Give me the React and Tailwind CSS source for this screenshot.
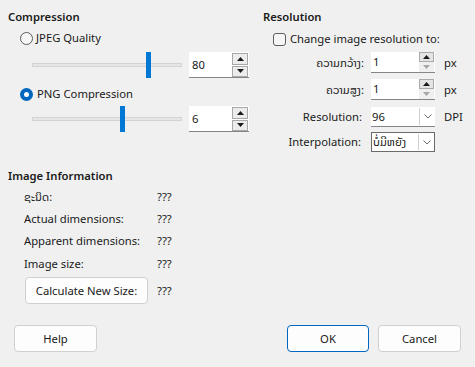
import React from 'react';

function Radio({ checked }) {
  if (checked) {
    return (
      <span className="w-[13px] h-[13px] rounded-full bg-[#0067c0] flex items-center justify-center shrink-0">
        <span className="w-[5px] h-[5px] rounded-full bg-white" />
      </span>
    );
  }
  return <span className="w-[13px] h-[13px] rounded-full border border-[#5d5d5d] bg-[#f6f6f6] shrink-0" />;
}

function Arrow({ up, disabled }) {
  return (
    <svg width="7" height="4" viewBox="0 0 7 4">
      {up ? (
        <path d="M0 4 L3.5 0 L7 4 Z" fill={disabled ? '#a6a6a6' : '#1a1a1a'} />
      ) : (
        <path d="M0 0 L3.5 4 L7 0 Z" fill={disabled ? '#a6a6a6' : '#1a1a1a'} />
      )}
    </svg>
  );
}

function Slider({ thumb }) {
  return (
    <div className="relative w-[150px] h-[26px] flex items-center">
      <div className="w-full h-[4px] bg-[#e6e6e6] border border-[#d3d3d3]" />
      <div className={`absolute top-0 h-[26px] w-[5px] bg-[#0078d4] ${thumb}`} />
    </div>
  );
}

function BigSpin({ value }) {
  return (
    <div className="w-[60px] h-[26px] flex bg-white border-b border-[#858585]">
      <span className="flex-1 flex items-center pl-[3px]">{value}</span>
      <div className="flex flex-col justify-center gap-[1px] pr-[1px]">
        <span className="w-[16px] h-[12px] flex items-center justify-center border border-[#a8a8a8] bg-[#ececec]">
          <Arrow up />
        </span>
        <span className="w-[16px] h-[11px] flex items-center justify-center border border-[#a8a8a8] bg-[#ececec]">
          <Arrow />
        </span>
      </div>
    </div>
  );
}

function SmallSpin({ value }) {
  return (
    <div className="w-[64px] h-[21px] flex bg-white border-b border-[#858585]">
      <span className="flex-1 flex items-center pl-[2px]">{value}</span>
      <div className="flex flex-col justify-center pr-[1px]">
        <span className="w-[15px] h-[10px] flex items-center justify-center border border-[#a8a8a8] bg-[#e4e4e4]">
          <Arrow up />
        </span>
        <span className="w-[15px] h-[10px] flex items-center justify-center bg-[#efefef]">
          <Arrow disabled />
        </span>
      </div>
    </div>
  );
}

function Combo({ value, framed }) {
  return (
    <div
      className={`w-[64px] h-[20px] flex bg-white ${
        framed ? 'border border-[#6b6b6b]' : 'border-b border-[#858585]'
      }`}
    >
      <span className="flex-1 flex items-center pl-[1px] overflow-hidden whitespace-nowrap">{value}</span>
      <span className="w-[16px] flex items-center justify-center border-l border-[#cfcfcf] my-[1px]">
        <svg width="8" height="5" viewBox="0 0 8 5">
          <path d="M0.5 0.5 L4 4 L7.5 0.5" fill="none" stroke="#6b6b6b" strokeWidth="1" />
        </svg>
      </span>
    </div>
  );
}

function Button({ children, className }) {
  return (
    <div
      className={`h-[27px] flex items-center justify-center rounded-[4px] bg-[#fdfdfd] border ${className}`}
    >
      {children}
    </div>
  );
}

function InfoRow({ label }) {
  return (
    <div className="flex h-[16px] items-center">
      <span className="w-[133px]">{label}</span>
      <span>???</span>
    </div>
  );
}

export default function App() {
  return (
    <div className="w-[475px] h-[367px] bg-[#f0f0f0] text-[11.25px] text-[#1a1a1a] leading-[16px] font-['Noto_Sans','Noto_Sans_Lao',sans-serif] overflow-hidden">
      <div className="flex pt-[9px] pl-[8px]">
        {/* left column */}
        <div className="w-[255px] flex flex-col">
          <div className="h-[16px] font-semibold">Compression</div>
          <div className="mt-[5px] h-[16px] flex items-center gap-[3px] pl-[12px]">
            <Radio />
            <span>JPEG Quality</span>
          </div>
          <div className="mt-[6px] flex items-center pl-[24px] gap-[7px]">
            <Slider thumb="left-[114px]" />
            <BigSpin value="80" />
          </div>
          <div className="mt-[8px] h-[16px] flex items-center gap-[4px] pl-[12px]">
            <Radio checked />
            <span>PNG Compression</span>
          </div>
          <div className="mt-[4px] flex items-center pl-[24px] gap-[7px]">
            <Slider thumb="left-[88px]" />
            <BigSpin value="6" />
          </div>

          <div className="mt-[36px] h-[16px] font-semibold">Image Information</div>
          <div className="mt-[5px] flex flex-col gap-[6px] pl-[16px]">
            <InfoRow label="ຊະນິດ:" />
            <InfoRow label="Actual dimensions:" />
            <div className="flex flex-col gap-[7px]">
              <InfoRow label="Apparent dimensions:" />
              <InfoRow label="Image size:" />
            </div>
          </div>
          <div className="mt-[5px] flex items-center pl-[17px]">
            <Button className="w-[123px] border-[#d0d0d0]">Calculate New Size:</Button>
            <span className="ml-[9px]">???</span>
          </div>
        </div>

        {/* right column */}
        <div className="flex flex-col">
          <div className="h-[16px] font-semibold">Resolution</div>
          <div className="mt-[6px] h-[16px] flex items-center gap-[4px] pl-[10px]">
            <span className="w-[13px] h-[13px] rounded-[3px] border border-[#5d5d5d] bg-[#f6f6f6]" />
            <span>Change image resolution to:</span>
          </div>
          <div className="mt-[5px] flex items-center h-[21px]">
            <span className="w-[101px] text-right">ຄວາມກວ້າງ:</span>
            <span className="ml-[7px]">
              <SmallSpin value="1" />
            </span>
            <span className="ml-[9px]">px</span>
          </div>
          <div className="mt-[6px] flex items-center h-[21px]">
            <span className="w-[101px] text-right">ຄວາມສູງ:</span>
            <span className="ml-[7px]">
              <SmallSpin value="1" />
            </span>
            <span className="ml-[9px]">px</span>
          </div>
          <div className="mt-[7px] flex items-center h-[20px]">
            <span className="w-[99px] text-right">Resolution:</span>
            <span className="ml-[9px]">
              <Combo value="96" />
            </span>
            <span className="ml-[9px]">DPI</span>
          </div>
          <div className="mt-[5px] flex items-center h-[20px]">
            <span className="w-[98px] text-right">Interpolation:</span>
            <span className="ml-[10px]">
              <Combo value="ບໍ່ມີຫຍັງ" framed />
            </span>
          </div>
        </div>
      </div>

      <div className="mt-[21px] flex justify-between px-[14px]">
        <Button className="w-[83px] border-[#d0d0d0]">Help</Button>
        <div className="flex gap-[9px]">
          <Button className="w-[82px] border-[#0067c0]">OK</Button>
          <Button className="w-[83px] border-[#d0d0d0]">Cancel</Button>
        </div>
      </div>
    </div>
  );
}
